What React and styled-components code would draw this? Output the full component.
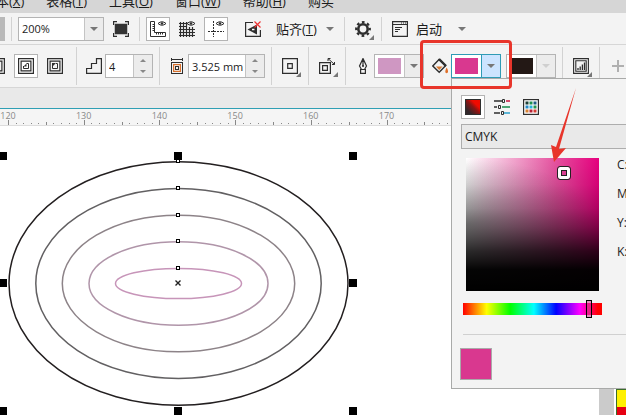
import styled, { createGlobalStyle, css } from "styled-components";

const GlobalStyle = createGlobalStyle`
    * {
        box-sizing: border-box;
    }

    body {
        margin: 0;
        overflow: hidden;
        background: #fff;
        color: #1c1c1c;
        font-family: "Open Sans", "Noto Sans CJK SC", sans-serif;
        font-size: 12px;
    }

    button, input {
        margin: 0;
        padding: 0;
        font: inherit;
        color: inherit;
    }
`

const Page = styled.div`
    position: relative;
    display: flex;
    flex-direction: column;
    width: 100%;
    height: 100vh;
    overflow: hidden;
`

const MenuBar = styled.nav`
    display: flex;
    flex: none;
    align-items: flex-end;
    gap: 22px;
    height: 13px;
    padding-bottom: 4px;
    background: #d6d6d6;
    overflow: hidden;
`

const MenuItem = styled.button`
    flex: none;
    border: 0;
    background: none;
    font-size: 13px;
    line-height: 16px;
    white-space: nowrap;

    &:first-child {
        margin-left: -17px;
    }
`

const Toolbar = styled.div`
    display: flex;
    flex: none;
    align-items: center;
    height: ${({ $tall }) => ($tall ? 43 : 32)}px;
    background: #f3f3f3;
    border-bottom: 1px solid #d6d6d6;
`

const Group = styled.div`
    display: flex;
    flex: none;
    align-items: center;
    gap: ${({ $wide }) => ($wide ? 7 : 5)}px;
`

const DirectionGroup = styled(Group)`
    width: 85px;
    padding-right: 3px;
    margin-left: -15px;
`

const Divider = styled.div`
    flex: none;
    align-self: center;
    width: 1px;
    height: ${({ $tall }) => ($tall ? 38 : 24)}px;
    margin: 0 6px;
    background: ${({ $hidden }) => ($hidden ? "transparent" : "#d2d2d2")};
`

const DockEdge = styled.div`
    flex: none;
    width: 5px;
    height: 24px;
    background: #b9b9b9;
`

const IconButton = styled.button`
    position: relative;
    display: flex;
    flex: none;
    align-items: center;
    justify-content: center;
    width: 24px;
    height: 24px;
    border: 1px solid ${({ $on }) => ($on ? "#b4b4b4" : "transparent")};
    background: ${({ $on }) => ($on ? "#fff" : "none")};

    ${({ $flyout }) => $flyout && css`
        &::after {
            content: '';
            position: absolute;
            right: 0;
            bottom: 0;
            border-left: 5px solid transparent;
            border-bottom: 5px solid #777;
        }
    `}
`

const TextButton = styled.button`
    display: flex;
    flex: none;
    align-items: center;
    justify-content: space-between;
    width: ${({ $width }) => $width}px;
    height: 24px;
    padding: 0 4px;
    border: 0;
    background: none;
    font-size: 13px;
    white-space: nowrap;
`

const ButtonLabel = styled.span`
    display: flex;
    align-items: center;
    gap: 8px;
`

const Arrow = styled.span`
    flex: none;
    border: 4px solid transparent;
    border-top-color: ${({ $color }) => $color || "#777"};
    border-bottom: 0;
`

const Field = styled.label`
    display: flex;
    flex: none;
    align-items: center;
    gap: 3px;
    padding-left: 3px;
`

const Box = styled.div`
    display: flex;
    flex: none;
    width: ${({ $width }) => $width}px;
    height: 24px;
    border: 1px solid ${({ $active }) => ($active ? "#2f9bb5" : "#b4b4b4")};
    background: #fff;
`

const BoxInput = styled.input`
    flex: 1;
    min-width: 0;
    padding-left: 3px;
    border: 0;
    outline: 0;
    background: none;
    font-size: 11px;
`

const BoxButton = styled.button`
    display: flex;
    flex: none;
    align-items: center;
    justify-content: center;
    width: 19px;
    border: 0;
    border-left: 1px solid ${({ $active }) => ($active ? "#2f9bb5" : "#c4c4c4")};
    background: ${({ $active }) => ($active ? "#cce4ff" : "#ececec")};
`

const Stepper = styled.div`
    display: flex;
    flex: none;
    flex-direction: column;
    width: 19px;
    border-left: 1px solid #c4c4c4;
    background: #ececec;
`

const Step = styled.button`
    display: flex;
    flex: 1;
    align-items: center;
    justify-content: center;
    border: 0;
    background: none;
`

const StepArrow = styled.span`
    border: 3px solid transparent;
    border-${({ $up }) => ($up ? "bottom" : "top")}-color: #888;
    border-${({ $up }) => ($up ? "top" : "bottom")}: 0;
`

const Swatch = styled.button`
    flex: 1;
    margin: 3px;
    border: 0;
    background: ${({ $color }) => $color};
`

const Anchor = styled.div`
    position: relative;
`

const Callout = styled.div`
    position: absolute;
    top: -14px;
    left: -31px;
    z-index: 3;
    width: 92px;
    height: 49px;
    border: 3px solid #e8352b;
    border-radius: 4px;
    pointer-events: none;
`

const Pointer = styled.svg`
    position: absolute;
    top: 34px;
    left: 94px;
    z-index: 3;
    pointer-events: none;
`

const Popup = styled.div`
    position: absolute;
    top: 100%;
    left: 0;
    z-index: 2;
    width: 240px;
    height: 311px;
    padding: 16px 0 0 9px;
    border: 1px solid #a9aaa9;
    background: #f3f3f3;
`

const Modes = styled.div`
    display: flex;
    gap: 5px;
`

const ModelSelect = styled.select`
    display: block;
    width: 100%;
    height: 25px;
    margin: 5px 0 9px;
    padding: 0 3px;
    border: 1px solid #adadad;
    border-radius: 0;
    appearance: none;
    background: #e9e9e9;
    color: inherit;
    font: inherit;
    font-size: 12px;
`

const Mixer = styled.div`
    display: flex;
    gap: 18px;
    padding-left: 5px;
`

const Shade = styled.div`
    position: relative;
    width: 133px;
    height: 133px;
    background:
        linear-gradient(180deg, rgba(0, 0, 0, 0) 0%, rgba(0, 0, 0, 0.08) 20%, rgba(0, 0, 0, 0.24) 38%, rgba(0, 0, 0, 0.46) 52%, rgba(0, 0, 0, 0.8) 70%, rgba(0, 0, 0, 0.98) 84%, #000 100%),
        radial-gradient(ellipse at 0% 50%, rgba(0, 0, 0, 0.3) 0%, rgba(0, 0, 0, 0) 70%),
        linear-gradient(90deg, #fff 0%, #f2a4cd 36%, #e6509f 68%, #e6007e 100%);
`

const ShadeMarker = styled.div`
    position: absolute;
    top: 9px;
    left: 92px;
    width: 12px;
    height: 12px;
    border: 3px solid #fff;
    border-radius: 2px;
    outline: 1px solid #222;
    box-shadow: inset 0 0 0 1px #222;
`

const Channels = styled.div`
    display: flex;
    flex-direction: column;
    gap: 9px;
    margin-top: -3px;
`

const Channel = styled.label`
    display: flex;
    gap: 8px;
    height: 20px;
    line-height: 20px;
`

const ChannelInput = styled.input`
    width: 40px;
    height: 20px;
    border: 1px solid #b4b4b4;
`

const Hue = styled.input`
    display: block;
    appearance: none;
    width: 139px;
    height: 12px;
    margin: 12px 0 19px 2px;
    background: linear-gradient(90deg, #f00, #ff0 17%, #0f0 34%, #0ff 51%, #00f 67%, #f0f 84%, #f00 97%);

    &::-webkit-slider-thumb {
        appearance: none;
        width: 6px;
        height: 18px;
        border: 1px solid #000;
        border-radius: 0;
        background: #d6359088;
    }
`

const Preview = styled.div`
    margin-left: 2px;
    padding-top: 13px;
    border-top: 1px solid #d0d0d0;
`

const PreviewSwatch = styled.div`
    width: 32px;
    height: 32px;
    margin-left: -3px;
    border: 1px solid #aaa;
    background: #d9388f;
`

const TabStrip = styled.div`
    flex: none;
    height: 20px;
    background: #e9e9e9;
`

const Ruler = styled.div`
    flex: none;
    height: 18px;
    border-top: 1px solid #2f9fb4;
    border-bottom: 1px solid #ddd;
    background: #f5f5f5;
    overflow: hidden;

    svg {
        display: block;
    }
`

const Workspace = styled.main`
    display: flex;
    flex: 1;
    min-height: 0;
`

const Canvas = styled.div`
    flex: 1;
    min-width: 0;
    overflow: hidden;

    svg {
        display: block;
    }
`

const ScrollTrack = styled.div`
    flex: none;
    width: 15px;
    background: #cbcbcb;
`

const Palette = styled.div`
    display: flex;
    flex: none;
    flex-direction: column;
    justify-content: flex-end;
    width: 10px;
    margin-left: 2px;
    border-left: 1px solid #3c6e28;
    background: #3c6e28;
`

const PaletteColor = styled.button`
    height: ${({ $height }) => $height}px;
    border: 0;
    background: ${({ $color }) => $color};
`

const Icon = ({ children, size = 16, ...rest }) => (
    <svg width={size} height={size} viewBox="0 0 16 16" fill="none" stroke="#2e2e2e" strokeWidth="1.5" aria-hidden="true" {...rest}>
        {children}
    </svg>
)

const FullScreenIcon = () => (
    <Icon>
        <rect x="2.5" y="3.5" width="11" height="9" fill="#333" stroke="#333" />
        <path d="M.6 4V.7H4M12 .7h3.4V4M.6 12v3.3H4M12 15.3h3.4V12" strokeWidth="1.2" />
    </Icon>
)

const Eye = () => (
    <>
        <path d="M8 2.5Q12 -1 16 2.5Q12 6 8 2.5Z" strokeWidth="1" />
        <circle cx="12" cy="2.5" r="1.2" fill="#2e2e2e" stroke="none" />
    </>
)

const RulerIcon = () => (
    <Icon overflow="visible">
        <path d="M.5 .5H4.5V11.5H15.500V15.500H.5Z" strokeWidth="1" />
        <path d="M2.500 3.500h2M2.500 5.500h2M2.500 7.500h2M2.500 9.500h2M6.500 11.500v2M8.500 11.500v2M10.500 11.500v2M12.500 11.500v2" strokeWidth="1" />
        <Eye />
    </Icon>
)

const GridIcon = () => (
    <Icon overflow="visible">
        <path d="M1.5 1v15M4.5 1v15M7.5 1v15M10.5 6v10M13.5 6v10M0 2.5h8M0 5.5h8M0 8.5h16M0 11.5h16M0 14.5h16" strokeWidth="1.2" />
        <Eye />
    </Icon>
)

const GuideIcon = () => (
    <Icon overflow="visible">
        <path d="M5.5 0v16M0 10.5h16" strokeWidth="1" strokeDasharray="2 1" />
        <Eye />
    </Icon>
)

const SnapOffIcon = () => (
    <Icon>
        <path d="M8 1.500H.6v13.900h14.800V9" strokeWidth="1.2" />
        <path d="M12 3.500L2.500 8.500l9.500 5Z" fill="#2e2e2e" stroke="none" />
        <path d="M7 8.500h2.500" stroke="#fff" />
        <path d="M9.5 .5l6 6M15.5 .5l-6 6" stroke="#e33" strokeWidth="1.2" />
    </Icon>
)

const GearIcon = () => (
    <Icon>
        <circle cx="8" cy="8" r="4.7" strokeWidth="2.6" />
        <circle cx="8" cy="8" r="6.8" strokeWidth="2.2" strokeDasharray="2.7 2.64" strokeDashoffset="1.35" />
    </Icon>
)

const LaunchIcon = () => (
    <Icon>
        <path d="M.6 .6h14.8v14.8H.6ZM.6 3.500h14.8" strokeWidth="1.2" />
        <path d="M9 2h1M11 2h1M13 2h1M3 6.5h7M3 8.5h5M3 10.5h3" strokeWidth="1" />
    </Icon>
)

const ContourIcon = ({ kind }) => (
    <Icon>
        <path d="M.6 .6h14.8v14.8H.6ZM3.1 3.1h9.8v9.8H3.1Z" strokeWidth="1.2" />
        {kind === "center" && <path d="M5.5 5.5h5v5h-5Z" strokeWidth="1" />}
        {kind === "inside" && (
            <>
                <path d="M5.500 8v2.500h5v-5H8.500" strokeWidth="1" />
                <path d="M8.500 5.500v3h-3Z" fill="#2e2e2e" stroke="none" />
            </>
        )}
        {kind === "outside" && (
            <>
                <path d="M5.500 8v2.500h5v-5H9" strokeWidth="1" />
                <path d="M5 5h4L5 9Z" fill="#2e2e2e" stroke="none" />
            </>
        )}
    </Icon>
)

const StepsIcon = () => (
    <Icon>
        <path d="M.6 15.4V10.5H5.5V5.5H10.5V.6H15.4V15.4Z" strokeWidth="1.2" />
    </Icon>
)

const OffsetIcon = () => (
    <Icon>
        <path d="M2.5 0v3M13.5 0v3M2.5 1.5h11" strokeWidth="1" />
        <rect x="2.5" y="4.5" width="11" height="11" strokeWidth="1" />
        <rect x="4.6" y="6.6" width="6.800" height="6.800" stroke="#d8702c" strokeWidth="1.200" />
        <rect x="6.500" y="8.500" width="3" height="3" strokeWidth="1" />
    </Icon>
)

const CornerIcon = () => (
    <Icon>
        <path d="M.6 .6h14.8v14.8H.6ZM5.7 5.7h4.6v4.6H5.7Z" strokeWidth="1.2" />
    </Icon>
)

const AccelerateIcon = () => (
    <Icon>
        <path d="M.6 4.600h10.800v10.800H.6ZM3.600 7.600h4.800v4.800H3.600Z" strokeWidth="1.200" />
        <path d="M9 .500l6.500 6M9 3V.500h2.500M15.500 4v2.500H13" strokeWidth="1" />
    </Icon>
)

const PenIcon = () => (
    <Icon>
        <path d="M8 .5L4.5 8l2 3.5h3l2-3.5ZM8 1v7M5.6 11.5h4.8v3.8H5.6Z" strokeWidth="1.2" />
        <circle cx="8" cy="8" r="1" fill="#2e2e2e" stroke="none" />
    </Icon>
)

const BucketIcon = () => (
    <Icon>
        <path d="M7 1.5l6.5 6.2L7.2 14.3.8 8Z" strokeWidth="1.4" />
        <path d="M7 1l7 7" strokeWidth="2.4" />
        <path d="M4 8.5h6.6L7.2 12Z" fill="#d87832" stroke="none" />
        <path d="M14.6 9.5c2 3 1.8 5.7 0 5.7s-1.600-2.700 0-5.700Z" fill="#e0702a" stroke="none" />
    </Icon>
)

const PropertiesIcon = () => (
    <Icon>
        <path d="M.6 .6h14.8v14.8H.6ZM2.800 2.800h10.400v10.400H2.800Z" strokeWidth="1.1" />
        <path d="M5 12v-2M7.200 12V8.500M9.400 12V6.500M11.500 12V4.500" strokeWidth="1.3" />
    </Icon>
)

const ShadeIcon = () => (
    <Icon>
        <defs>
            <linearGradient id="shade" x1="0.2" y1="0.8" x2="0.9" y2="0.1">
                <stop offset="0" stopColor="#33272a" />
                <stop offset="0.45" stopColor="#8d1514" />
                <stop offset="0.7" stopColor="#f00a00" />
            </linearGradient>
        </defs>
        <rect x=".5" y=".5" width="15" height="15" fill="url(#shade)" strokeWidth="1" />
    </Icon>
)

const SlidersIcon = () => (
    <Icon>
        <path d="M0 2h8" />
        <path d="M12 2h4" stroke="#c8143c" />
        <path d="M0 8h3" />
        <path d="M8 8h8" stroke="#168a4a" />
        <path d="M0 14h6" />
        <path d="M10 14h6" stroke="#2aa0cc" />
        <path d="M8.500 .5h2v3h-2ZM4.500 6.500h2v3h-2ZM7.500 12.500h2v3h-2Z" strokeWidth="1" />
    </Icon>
)

const paletteDots = ["#1f4038", "#1c8f4c", "#1d5d83", "#278ac5", "#29b4d8", "#26934e", "#d78234", "#b52134", "#d23b32"]

const PaletteIcon = () => (
    <Icon>
        <rect x=".6" y=".6" width="14.800" height="14.800" strokeWidth="1.2" fill="#fff" />
        {paletteDots.map((color, i) => (
            <rect key={i} x={2.5 + (i % 3) * 4} y={2.5 + Math.floor(i / 3) * 4} width="3" height="3" fill={color} stroke="none" />
        ))}
    </Icon>
)

const PlusIcon = () => (
    <Icon stroke="#b0b0b0" strokeWidth="2">
        <path d="M8 2v12M2 8h12" />
    </Icon>
)

const menus = [["文本", "X"], ["表格", "T"], ["工具", "O"], ["窗口", "W"], ["帮助", "H"], ["购买"]]

const Spin = ({ label, value, width, icon }) => (
    <Field>
        {icon}
        <Box $width={width}>
            <BoxInput aria-label={label} defaultValue={value} />
            <Stepper>
                <Step aria-label={`${label} +`}><StepArrow $up /></Step>
                <Step aria-label={`${label} -`}><StepArrow /></Step>
            </Stepper>
        </Box>
    </Field>
)

const ColorBox = ({ label, color, active, disabled, children, width = 50 }) => (
    <Anchor>
        <Box $width={width} $active={active}>
            <Swatch aria-label={label} $color={color} />
            <BoxButton aria-label={`${label} ▾`} $active={active} disabled={disabled}>
                <Arrow $color={disabled && "#cfcfcf"} />
            </BoxButton>
        </Box>
        {children}
    </Anchor>
)

const ColorPopup = () => (
    <Popup>
        <Modes>
            <IconButton $on aria-label="颜色查看器"><ShadeIcon /></IconButton>
            <IconButton aria-label="颜色滑块"><SlidersIcon /></IconButton>
            <IconButton aria-label="调色板"><PaletteIcon /></IconButton>
        </Modes>
        <ModelSelect aria-label="颜色模型" defaultValue="CMYK">
            <option>CMYK</option>
        </ModelSelect>
        <Mixer>
            <Shade><ShadeMarker /></Shade>
            <Channels>
                {["C", "M", "Y", "K"].map(name => (
                    <Channel key={name}>{name}:<ChannelInput /></Channel>
                ))}
            </Channels>
        </Mixer>
        <Hue type="range" min="0" max="360" defaultValue="334" aria-label="色相" />
        <Preview><PreviewSwatch /></Preview>
    </Popup>
)

const marks = [120, 130, 140, 150, 160, 170, 180, 190]

const RulerScale = () => (
    <svg width="100%" height="16">
        {marks.map((mark, i) => {
            const x = 8 + i * 75.7
            return (
                <g key={mark}>
                    <text x={x} y="10" fontSize="9" fill="#888" textAnchor="middle">{mark}</text>
                    {Array.from({ length: 10 }, (_, n) => (
                        <rect key={n} x={Math.round(x + n * 7.57)} y={n === 0 ? 11 : n === 5 ? 13 : 14} width="1" height={n === 0 ? 5 : n === 5 ? 3 : 1} fill="#888" />
                    ))}
                </g>
            )
        })}
    </svg>
)

const rings = [
    { rx: 169.5, ry: 121.7, color: "#231f20" },
    { rx: 142.7, ry: 95, color: "#626062" },
    { rx: 116.2, ry: 68.3, color: "#8d8388" },
    { rx: 89.5, ry: 41.7, color: "#b095a9" },
    { rx: 63, ry: 15.1, color: "#c795b9" },
]

const Drawing = () => (
    <svg width="400" height="289" viewBox="0 126 400 289">
        {rings.map(ring => (
            <ellipse key={ring.rx} cx="178.500" cy="283.500" rx={ring.rx} ry={ring.ry} fill="none" stroke={ring.color} strokeWidth="1.500" />
        ))}
        {rings.map(ring => (
            <rect key={ring.rx} x="176.500" y={Math.round(283 - ring.ry) - 1.5} width="3" height="3" fill="#fff" stroke="#000" />
        ))}
        {[152, 279, 407].map(y => [-1, 174, 349].map(x => (
            (x !== 174 || y !== 279) && <rect key={`${x}-${y}`} x={x} y={y} width="8" height="8" />
        )))}
        <path d="M175.500 280.500l5 5M180.500 280.500l-5 5" stroke="#222" strokeWidth="1.400" />
    </svg>
)

const App = () => {
    return (
        <Page>
            <GlobalStyle />

            <MenuBar>
                {menus.map(([name, key]) => (
                    <MenuItem key={name}>{name}{key && <>(<u>{key}</u>)</>}</MenuItem>
                ))}
            </MenuBar>

            <Toolbar>
                <DockEdge />
                <Divider />
                <Group>
                    <Box $width={86}>
                        <BoxInput aria-label="缩放级别" defaultValue="200%" />
                        <BoxButton aria-label="缩放列表"><Arrow /></BoxButton>
                    </Box>
                    <IconButton aria-label="全屏预览"><FullScreenIcon /></IconButton>
                </Group>
                <Divider />
                <Group>
                    <IconButton $on aria-label="显示标尺"><RulerIcon /></IconButton>
                    <IconButton aria-label="显示网格"><GridIcon /></IconButton>
                    <IconButton $on aria-label="显示辅助线"><GuideIcon /></IconButton>
                </Group>
                <Divider $hidden />
                <Group $wide>
                    <IconButton aria-label="关闭贴齐"><SnapOffIcon /></IconButton>
                    <TextButton $width={66}>
                        <span>贴齐(<u>T</u>)</span>
                        <Arrow />
                    </TextButton>
                </Group>
                <Divider />
                <IconButton $flyout aria-label="选项"><GearIcon /></IconButton>
                <Divider />
                <TextButton $width={82}>
                    <ButtonLabel><LaunchIcon />启动</ButtonLabel>
                    <Arrow />
                </TextButton>
            </Toolbar>

            <Toolbar $tall>
                <DirectionGroup>
                    <IconButton aria-label="到中心"><ContourIcon kind="center" /></IconButton>
                    <IconButton $on aria-label="内部轮廓"><ContourIcon kind="inside" /></IconButton>
                    <IconButton aria-label="外部轮廓"><ContourIcon kind="outside" /></IconButton>
                </DirectionGroup>
                <Divider $tall />
                <Spin label="轮廓图步长" value="4" width={48} icon={<StepsIcon />} />
                <Divider $tall />
                <Spin label="轮廓图偏移" value="3.525 mm" width={77} icon={<OffsetIcon />} />
                <Divider $tall />
                <IconButton $flyout aria-label="轮廓图角"><CornerIcon /></IconButton>
                <Divider $tall />
                <IconButton $flyout aria-label="对象和颜色加速"><AccelerateIcon /></IconButton>
                <Divider $tall />
                <Group>
                    <Field as="div">
                        <PenIcon />
                        <ColorBox label="轮廓色" color="#cf97c2" />
                    </Field>
                    <Field as="div">
                        <BucketIcon />
                        <ColorBox label="填充色" color="#d9388f" active>
                            <ColorPopup />
                            <Callout />
                            <Pointer width="34" height="76" viewBox="0 0 34 76">
                                <path d="M31 0L14 61l7 -1L9 74 6 57l5 2Z" fill="#e8352b" />
                            </Pointer>
                        </ColorBox>
                    </Field>
                    <ColorBox label="最后一个填充挑选器" color="#231815" disabled />
                </Group>
                <Divider $tall />
                <IconButton $flyout aria-label="对象属性"><PropertiesIcon /></IconButton>
                <Divider $tall />
                <Group>
                    <IconButton aria-label="添加"><PlusIcon /></IconButton>
                </Group>
            </Toolbar>

            <TabStrip />
            <Workspace>
                <Canvas>
                    <Ruler><RulerScale /></Ruler>
                    <Drawing />
                </Canvas>
                <ScrollTrack />
                <Palette>
                    <PaletteColor aria-label="黄" $color="#fff000" $height={17} />
                    <PaletteColor aria-label="红" $color="#e60012" $height={8} />
                </Palette>
            </Workspace>
        </Page>
    )
}

export default App
